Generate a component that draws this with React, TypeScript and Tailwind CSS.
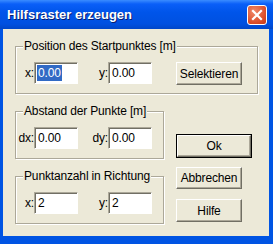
const beige = "bg-[#ECE9D8]";

function Group({
  label,
  className,
  children,
}: {
  label: string;
  className?: string;
  children: React.ReactNode;
}) {
  return (
    <div
      className={`border border-[#ACA899] shadow-[inset_1px_1px_0_#fff,1px_1px_0_#fff] h-[48px] ${className ?? ""}`}
    >
      <div className={`-mt-[8px] ml-[7px] w-fit px-[1px] leading-[14px] ${beige}`}>{label}</div>
      {children}
    </div>
  );
}

function Field({
  label,
  value,
  labelWidth,
  selected,
}: {
  label: string;
  value: string;
  labelWidth: string;
  selected?: boolean;
}) {
  return (
    <div className="flex items-center">
      <span className={`${labelWidth} text-right leading-[14px]`}>{label}</span>
      <div className="flex h-[22px] w-[44px] items-center border border-t-[#ACA899] border-l-[#ACA899] border-r-white border-b-white bg-white shadow-[inset_1px_1px_0_#716F64] pl-[2px]">
        {selected ? (
          <span className="bg-[#316AC5] px-[1px] leading-[16px] text-white">{value}</span>
        ) : (
          <span className="px-[1px] leading-[16px]">{value}</span>
        )}
      </div>
    </div>
  );
}

function Button({
  children,
  className,
  primary,
}: {
  children: React.ReactNode;
  className?: string;
  primary?: boolean;
}) {
  const inner =
    "flex h-full w-full items-center justify-center border border-t-white border-l-white border-r-[#716F64] border-b-[#716F64] shadow-[inset_-1px_-1px_0_#ACA899]";
  return (
    <div className={`${primary ? "border border-black" : ""} ${className ?? ""}`}>
      <div className={inner}>{children}</div>
    </div>
  );
}

export default function App() {
  return (
    <div className="h-[244px] w-[273px] overflow-hidden bg-[#0054E3] font-['Liberation_Sans',Arial,sans-serif] text-[12px] tracking-[-0.15px] text-black">
      {/* title bar */}
      <div className="flex h-[29px] items-center justify-between bg-[linear-gradient(to_bottom,#3A8CFF_0px,#0A5FF8_4px,#0055EA_12px,#0050E0_24px,#0046C8_29px)] pl-[7px] pr-[6px]">
        <span className="text-[13px] font-bold tracking-normal text-white [text-shadow:1px_1px_0_#0A1E6E]">
          Hilfsraster erzeugen
        </span>
        <div className="flex h-[20px] w-[20px] items-center justify-center rounded-[3px] border border-white bg-[radial-gradient(circle_at_35%_30%,#F0896A,#DA4A26_70%,#C23A1A)]">
          <svg width="12" height="12" viewBox="0 0 12 12">
            <path d="M2 2 L10 10 M10 2 L2 10" stroke="white" strokeWidth="2.2" strokeLinecap="square" />
          </svg>
        </div>
      </div>

      {/* body */}
      <div className={`ml-[3px] mr-[4px] h-[207px] ${beige} px-[12px] pt-[17px]`}>
        <Group label="Position des Startpunktes [m]" className="w-[243px]">
          <div className="ml-[6px] mt-[9px] flex items-start">
            <Field label="x:" value="0.00" labelWidth="w-[12px]" selected />
            <div className="ml-[21px]">
              <Field label="y:" value="0.00" labelWidth="w-[9px]" />
            </div>
            <Button className="ml-[24px] h-[23px] w-[66px]">Selektieren</Button>
          </div>
        </Group>

        <div className="mt-[17px] flex items-start">
          <div className="w-[149px]">
            <Group label="Abstand der Punkte [m]">
              <div className="ml-[2px] mt-[9px] flex items-start">
                <Field label="dx:" value="0.00" labelWidth="w-[16px]" />
                <div className="ml-[13px]">
                  <Field label="dy:" value="0.00" labelWidth="w-[17px]" />
                </div>
              </div>
            </Group>
            <Group label="Punktanzahl in Richtung" className="mt-[17px]">
              <div className="ml-[6px] mt-[9px] flex items-start">
                <Field label="x:" value="2" labelWidth="w-[12px]" />
                <div className="ml-[21px]">
                  <Field label="y:" value="2" labelWidth="w-[9px]" />
                </div>
              </div>
            </Group>
          </div>

          <div className="ml-[12px] flex flex-col">
            <Button primary className="mt-[23px] h-[24px] w-[76px]">Ok</Button>
            <Button className="mt-[9px] h-[22px] w-[66px]">Abbrechen</Button>
            <Button className="mt-[10px] h-[23px] w-[66px]">Hilfe</Button>
          </div>
        </div>
      </div>
    </div>
  );
}
